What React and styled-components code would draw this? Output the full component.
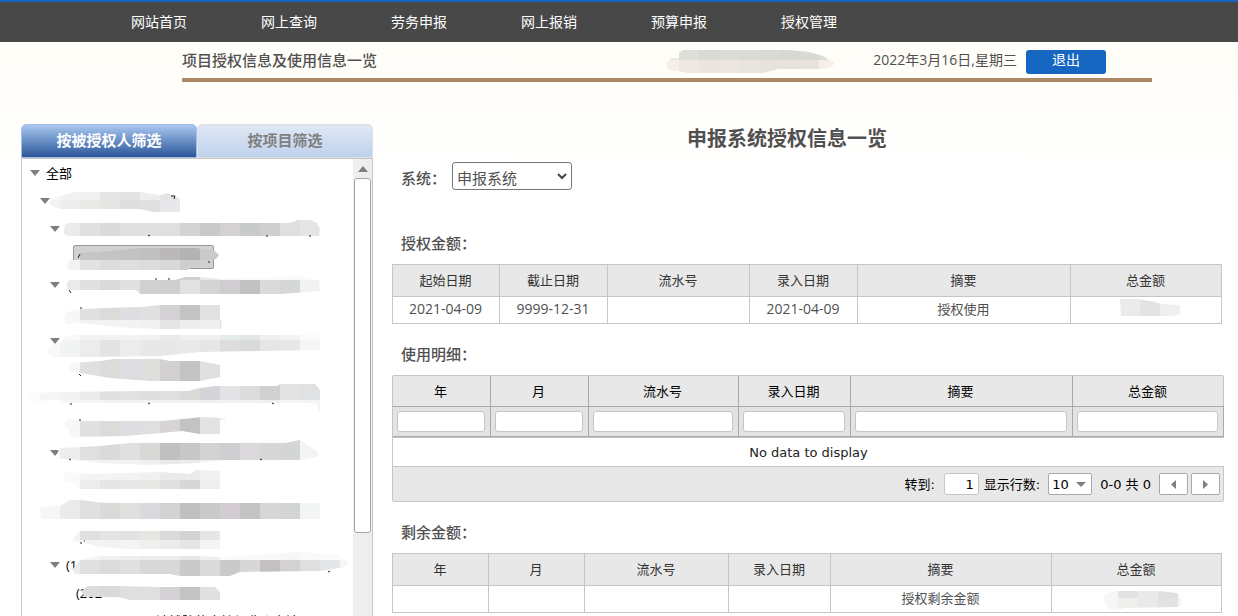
import styled, { createGlobalStyle } from "styled-components";

const navItems = ["网站首页", "网上查询", "劳务申报", "网上报销", "预算申报", "授权管理"];

// level decides the indent, text is what stays readable next to a mark
const treeRows = [
  { level: 0, open: true, text: "全部" },
  { level: 1, open: true },
  { level: 2, open: true },
  { level: 3, selected: true },
  { level: 2, open: true },
  { level: 3 },
  { level: 2, open: true },
  { level: 3 },
  { level: 2 },
  { level: 3 },
  { level: 2, open: true },
  { level: 3 },
  { level: 2 },
  { level: 3 },
  { level: 2, open: true, text: "(1" },
  { level: 3, text: "(202" },
  { level: 11, text: "读博院的支持经费张立波" },
];

// marks over private names: an outline, filled with 20px blocks.
// bands are [top, height, first block x, block colours]
const treeMarks = [
  {
    d: "M49 202L55 197L75 192H140L160 195L167 193L173 195L180 199V212H153L140 209H60L50 205Z",
    bands: [
      [180, 20, 40, "#f6f6f6 #f2f2f2 #f0f0f0 #e6e6e6 #e3e3e3 #eeecec #e6e4e6"],
      [200, 20, 40, "#f2f2f2 #ededed #e9e9e7 #e5e5e3 #dcdfdd #e0e0e1 #e8e8ea"],
    ],
  },
  {
    d: "M64 230L65 225L68 223H290L298 220H310L317 223L320 229L319 236H67L64 234Z",
    bands: [[220, 20, 60, "#ebebeb #e0e0e0 #dcdad9 #dfe0df #dfe0df #e0dfdf #d3d3d3 #c8cac9 #d3d1d2 #c9cbca #cfcfd1 #dfdfdf #e3e6e5"]],
  },
  {
    d: "M80 253L110 251L140 248H195L214 250L219 255L216 259L200 262L188 270H70L67 266L70 260H80Z",
    bands: [
      [240, 20, 60, "#f2f2f2 #c6c6c6 #c4c4c4 #c3c3c2 #c0c0c0 #bbb8b9 #b3b3b3 #cacaca"],
      [260, 20, 60, "#f2f2f2 #e2e2e2 #dcdcdc #dfdfe0 #dcdcdc #d8d8d8 #cccfce #d1d1d1"],
    ],
  },
  {
    d: "M66 284L69 280H175L185 277H200L220 279L300 276L319 280L320 291L295 293L280 294H140L136 290H69Z",
    bands: [
      [260, 20, 160, "#d0d0d0 #d0d0d0 #e9e9e9 #f5f5f5 #fafafa #fafafa #fafafa #fafafa"],
      [280, 20, 60, "#ebebeb #e0e0e0 #dcdad9 #dfe0e0 #d0d0d1 #cfcfcf #e3e1e2 #d4d4d5 #cfcdd0 #c2c2c2 #dadada #d6d8d8 #f0f3f2"],
    ],
  },
  {
    d: "M64 318L66 312L80 309L107 308L140 307L160 305H220V319L222 322L221 329H160L130 328L100 325L80 323L66 324Z",
    bands: [
      [300, 20, 60, "#f7f7f7 #e0e0e0 #dbdbd9 #dcdee2 #dfe0df #d3d1d3 #c3c3c3 #e1e1e1"],
      [320, 20, 60, "#f7f7f7 #f3f3f3 #f3f3f3 #f3f3f3 #f0f0f0 #e6e6e6 #ededed #efefef #e3e3e3"],
    ],
  },
  {
    d: "M47 351L50 345L60 343L67 336L72 335H320V350L260 351L200 352L160 356L90 357H52Z",
    bands: [
      [320, 20, 60, "#f8f9f8 #f3f3f3 #f2f2f2 #f3f3f3 #f0f0f0 #eaeaea #f0f0f0 #efefef #e6ecea #e3e8e7 #f0f0f0 #f3f3f3 #fbfbfb"],
      [340, 20, 40, "#f8faf9 #f1f4f3 #ececec #e4e4e4 #ececea #e8e8e8 #e8e8e8 #ebe8ea #e6e6e6 #dedcdf #dadada #e6e6e6 #e7e7e8 #f6f6f6"],
    ],
  },
  {
    d: "M69 368L73 363L100 361L115 359H160L170 361H200L220 365V377L200 381H150L110 378L80 373L72 372Z",
    bands: [[340, 60, 60, "#f7f7f7 #e0e0e0 #dbdbd9 #dcdde1 #dedfdd #d2d0d1 #c3c3c3 #e0e0e0"]],
  },
  {
    d: "M28 398L32 393L60 392L140 391H188L200 388L215 386H277L280 384H315L320 390V414L317 405L310 403H60V400L42 401L32 404Z",
    bands: [
      [380, 20, 20, "#fbfbfb #f6f6f6 #f2f2f2 #ebebeb #e0e0e0 #e3e2e1 #dedede #dfdfdf #dadad8 #d3d4d7 #e3e3e5 #dcdcdc #d0d0d3 #e3e3e4 #dfe1e2"],
      [400, 20, 20, "#fbfbfb #fafafa #f6f6f6 #f6f6f6 #f3f3f3 #f3f3f3 #f3f3f3 #f3f3f3 #f3f3f3 #f0f0f0 #f3f3f3 #f3f3f3 #f0f0f0 #f5f5f5 #f3f5f4"],
    ],
  },
  {
    d: "M64 424L68 419L80 421H162L203 417L225 418V420H220V434H200L182 431L150 434L125 436L72 437L69 430Z",
    bands: [[400, 40, 60, "#f7f7f7 #e0e0e0 #dbdbd9 #dcdee1 #dfdfdf #d6d4d5 #c3c3c3 #e3e3e3 #f0f0f0"]],
  },
  {
    d: "M58 450L62 448L100 446L130 443H285L300 440L318 452L319 456L300 460H225L200 463L150 465L100 463L70 459H60Z",
    bands: [
      [440, 20, 40, "#f5f5f5 #ededed #dfdfdf #dbdad9 #e0e0e0 #d8d8d7 #c0c0c0 #c8c6c7 #d3d3d3 #cfcfd2 #dbd9db #d7d7d7 #d4d6d5 #f2f5f4"],
      [460, 20, 40, "#fafafa #f6f6f6 #f3f3f3 #f2f2f2 #f2f2f2 #f0f0f0 #e9e9e9 #ececec #f2f2f2 #f2f2f2"],
    ],
  },
  {
    d: "M63 476L66 472L90 474L160 472L190 474L196 470L220 471V489H80L76 485L64 481Z",
    bands: [
      [460, 20, 60, "#fafafa #f4f4f4 #f3f3f3 #f2f2f2 #f0f0f0 #eaeaea #eaeaea #f0f0f0"],
      [480, 20, 60, "#fafafa #ececec #e6e6e5 #e8e8e8 #e8e8e7 #e0e0e0 #d7d7d7 #ecefee"],
    ],
  },
  {
    d: "M39 512L41 507L60 506L70 500H80L105 503H320V519H42Z",
    bands: [[500, 20, 20, "#f6f6f6 #f6f6f6 #ebebeb #e0e0e0 #dcdad9 #dfdfde #dadade #d2d2d2 #c0c0c0 #c9c9c9 #d3cdd3 #c3c3c3 #d7d7d7 #d3d5d4 #f2f5f4"]],
  },
  {
    d: "M73 538L80 531H220V549H130L100 547L80 542H75Z",
    bands: [
      [520, 20, 60, "#f3f3f3 #e0e0e0 #e4e4e2 #e3e3e3 #e6e6e3 #dadada #d3d3d3 #e6e6e6"],
      [540, 20, 60, "#f6f6f6 #f3f3f3 #f3f3f3 #f3f5f4 #f0f0f0 #ececec #e6e6e6 #f5f5f5"],
    ],
  },
  {
    d: "M72 570L80 560L100 556H200L220 557L300 552L340 555L341 558L346 560L348 564L345 567L320 571L240 572L230 576H180L170 574H75Z",
    bands: [
      [540, 20, 60, "#f3f3f3 #f3f3f3 #f0f0f0 #efefef #ececec #ececec #e6e6e6 #efefef #fafafa #f9f9f9 #f9f9f9 #f6f6f6 #f9f9f9 #fafafa #fafafa"],
      [560, 20, 60, "#ececec #e0e0e0 #dcdbda #dfdfdf #d8d8d8 #d8d8d8 #cacaca #dadada #cacaca #d7d7d7 #c3c0bf #d2d2d5 #dfdfdf #e3e5e8 #f6f6f6"],
    ],
  },
  {
    d: "M81 591L88 586H115L160 587H215L220 592V600H130L118 597H85Z",
    bands: [[580, 20, 80, "#dcdcdc #dad9d8 #dfdfe2 #dfdfdf #d4d2d4 #c3c3c3 #e0e0e0"]],
  },
];

const userMark = {
  d: "M0 13L4 8H12V3L16 0H122L142 2L156 6L162 10L167 13L165 17L160 18L152 19H112L96 23H20L12 21H4L0 18Z",
  bands: [
    [-10, 20, -8, "#ebe9e4 #dfdfda #d9d9d5 #dbdbd8 #dadad6 #d9d9d5 #d7d7d3 #d9d9d5 #dedeDA"],
    [10, 20, -8, "#f5efe8 #efe8e1 #eae5df #ede6e0 #e8e5de #e8e2dc #e8e2dc #e9e3dd #f5efe8"],
  ],
};

const amountMark = {
  d: "M0 0H18L36 3L41 5L60 6V15L53 17H1Z",
  bands: [[0, 20, 0, "#ebebeb #e3e3e3 #efefef"]],
};

const restMark = {
  d: "M0 6L4 2L16 0H56L74 2L79 9L76 16L20 17L14 20H6L4 14Z",
  bands: [
    [-3, 10, -5, "#f6f6f6 #e3e3e3 #eaeaea #e0e0e0 #f5f5f5"],
    [7, 20, -5, "#f6f6f6 #efefed #e9e9e9 #e2e2e2 #f3f3f3"],
  ],
};

const Mark = ({ id, mark }) => (
  <g clipPath={`url(#${id})`}>
    <clipPath id={id}>
      <path d={mark.d} />
    </clipPath>
    {mark.bands.map(([y, h, x, colors]) =>
      colors.split(" ").map((fill, i) => (
        <rect key={`${y}-${i}`} x={x + i * 20} y={y} width="20" height={h} fill={fill} shapeRendering="crispEdges" />
      ))
    )}
  </g>
);

const DataTable = ({ label, widths, heads, cells }) => (
  <PlainTable aria-label={label}>
    <colgroup>
      {widths.map((w, i) => (
        <Col key={i} $w={w} />
      ))}
    </colgroup>
    <thead>
      <tr>
        {heads.map((h) => (
          <th key={h}>{h}</th>
        ))}
      </tr>
    </thead>
    <tbody>
      <tr>
        {cells.map((c, i) => (
          <td key={i}>{c}</td>
        ))}
      </tr>
    </tbody>
  </PlainTable>
);

const usageHeads = ["年", "月", "流水号", "录入日期", "摘要", "总金额"];
const usageWidths = [98, 98, 150, 112, 222, 151];

const App = () => {
  return (
    <Page>
      <GlobalStyle />
      <Nav>
        {navItems.map((item) => (
          <a href="#/" key={item}>{item}</a>
        ))}
      </Nav>

      <TopBar>
        <h1>项目授权信息及使用信息一览</h1>
        <svg width="168" height="28" viewBox="0 -4 168 28">
          <Mark id="user" mark={userMark} />
        </svg>
        <Today>2022年3月16日,星期三</Today>
        <LogoutButton type="button">退出</LogoutButton>
      </TopBar>

      <Content>
        <Sidebar>
          <Tabs>
            <Tab type="button" $active>按被授权人筛选</Tab>
            <Tab type="button">按项目筛选</Tab>
          </Tabs>
          <TreePanel>
            <Tree>
              {treeRows.map((row, i) => (
                <TreeRow key={i} $level={row.level}>
                  <Arrow viewBox="0 0 10 6" $open={row.open}>
                    <path d="M0 0H10L5 6Z" />
                  </Arrow>
                  <Label $selected={row.selected}>{row.text}</Label>
                </TreeRow>
              ))}
              <Marks viewBox="22 159 331 458">
                {treeMarks.map((mark, i) => (
                  <Mark key={i} id={`tree-${i}`} mark={mark} />
                ))}
                <path
                  d="M171 196h4l-1 3M78 258l2-4M208 262h2M148 236l2-1M266 236h2M309 236h2M155 279h2M168 279h2M69 290l2 3M80 308h2M79 374l2 2M70 404h2M148 404l2-1M272 403l2 1M79 420h2M69 459l2 1M260 459l2 1M80 543l2 0M84 541h1M328 572l2-1"
                  fill="none"
                  stroke="#222"
                />
              </Marks>
            </Tree>
            <ScrollBar>
              <svg width="10" height="6" viewBox="0 0 10 6">
                <path d="M0 6H10L5 0Z" fill="#7f7f7f" />
              </svg>
              <Thumb />
            </ScrollBar>
          </TreePanel>
        </Sidebar>

        <Main>
          <h2>申报系统授权信息一览</h2>
          <SystemRow>
            <label htmlFor="system">系统：</label>
            <SelectBox>
              <select id="system">
                <option>申报系统</option>
              </select>
              <svg width="10" height="7" viewBox="0 0 10 7">
                <path d="M1 1L5 5L9 1" fill="none" stroke="#444" strokeWidth="2" />
              </svg>
            </SelectBox>
          </SystemRow>

          <h3>授权金额：</h3>
          <DataTable
            label="授权金额"
            widths={[107, 108, 142, 108, 213, 151]}
            heads={["起始日期", "截止日期", "流水号", "录入日期", "摘要", "总金额"]}
            cells={[
              <Digits>2021-04-09</Digits>,
              <Digits>9999-12-31</Digits>,
              "",
              <Digits>2021-04-09</Digits>,
              "授权使用",
              <svg width="68" height="20" viewBox="-8 0 68 20">
                <Mark id="amount" mark={amountMark} />
              </svg>,
            ]}
          />

          <h3>使用明细：</h3>
          <Grid>
            <GridTable aria-label="使用明细">
              <colgroup>
                {usageWidths.map((w, i) => (
                  <Col key={i} $w={w} />
                ))}
              </colgroup>
              <thead>
                <tr>
                  {usageHeads.map((h) => (
                    <th key={h}>{h}</th>
                  ))}
                </tr>
                <tr>
                  {usageHeads.map((h) => (
                    <td key={h}>
                      <input type="text" aria-label={h} />
                    </td>
                  ))}
                </tr>
              </thead>
              <tbody>
                <tr>
                  <td colSpan="6">No data to display</td>
                </tr>
              </tbody>
            </GridTable>
            <Pager>
              <label htmlFor="goto">转到:</label>
              <input id="goto" type="text" defaultValue="1" />
              <label htmlFor="size">显示行数:</label>
              <SizeBox>
                <select id="size">
                  <option>10</option>
                </select>
                <svg width="10" height="5" viewBox="0 0 10 5">
                  <path d="M0 0H10L5 5Z" fill="#7f7f7f" />
                </svg>
              </SizeBox>
              <span>0-0 共 0</span>
              <PagerButton type="button" aria-label="上一页">
                <svg width="5" height="9" viewBox="0 0 5 9">
                  <path d="M5 0V9L0 4.5Z" />
                </svg>
              </PagerButton>
              <PagerButton type="button" aria-label="下一页">
                <svg width="5" height="9" viewBox="0 0 5 9">
                  <path d="M0 0V9L5 4.5Z" />
                </svg>
              </PagerButton>
            </Pager>
          </Grid>

          <h3>剩余金额：</h3>
          <DataTable
            label="剩余金额"
            widths={[96, 96, 144, 102, 221, 170]}
            heads={usageHeads}
            cells={[
              "",
              "",
              "",
              "",
              "授权剩余金额",
              <svg width="94" height="22" viewBox="-14 -4 94 22">
                <Mark id="rest" mark={restMark} />
              </svg>,
            ]}
          />
        </Main>
      </Content>
    </Page>
  );
};

const GlobalStyle = createGlobalStyle`
  * {
    box-sizing: border-box;
    margin: 0;
    padding: 0;
  }
  body {
    font-family: "Open Sans", "Noto Sans CJK SC", sans-serif;
    font-size: 13px;
    color: #505050;
  }
  button, input, select {
    font-family: inherit;
  }
`;

const Page = styled.div`
  height: 100vh;
  overflow: hidden;
  background: linear-gradient(#fffdf7 40px, #ffffff 180px);
`;

const Nav = styled.nav`
  display: flex;
  height: 42px;
  padding-left: 94px;
  border-top: 2px solid #1866c0;
  background: #484848;
  a {
    width: 130px;
    line-height: 40px;
    font-size: 14px;
    text-align: center;
    text-decoration: none;
    color: #ffffff;
  }
`;

const TopBar = styled.header`
  display: flex;
  align-items: center;
  height: 40px;
  margin: 0 86px 0 182px;
  padding-right: 46px;
  border-bottom: 4px solid #ae8968;
  h1 {
    flex: 1;
    font-size: 15px;
    line-height: 24px;
    font-weight: 500;
  }
`;

const Today = styled.span`
  margin: 0 9px 0 38px;
  font-size: 14px;
  line-height: 24px;
`;

const LogoutButton = styled.button`
  width: 80px;
  height: 24px;
  margin-top: 4px;
  padding-bottom: 4px;
  border: none;
  border-radius: 3px;
  background: #1667c1;
  color: #ffffff;
  font-size: 14px;
  line-height: 20px;
`;

const Content = styled.div`
  display: flex;
  gap: 19px;
  padding: 42px 14px 0 21px;
`;

const Sidebar = styled.aside`
  width: 352px;
  flex-shrink: 0;
`;

const Tabs = styled.div`
  display: flex;
`;

const Tab = styled.button`
  flex: 1;
  height: 34px;
  padding-bottom: 4px;
  border: 1px solid ${({ $active }) => ($active ? "#a3c0e8" : "#dcdfe4")};
  border-radius: 5px 5px 0 0;
  background: ${({ $active }) =>
    $active ? "linear-gradient(#a9c8f0, #2a5699)" : "linear-gradient(#dfe8f5, #bfd1ec)"};
  color: ${({ $active }) => ($active ? "#ffffff" : "#808080")};
  font-size: 15px;
  font-weight: bold;
`;

const TreePanel = styled.div`
  display: flex;
  border: 1px solid #c6c6c6;
  background: #ffffff;
`;

const Tree = styled.ul`
  position: relative;
  flex: 1;
  list-style: none;
  color: #000000;
`;

const TreeRow = styled.li`
  display: flex;
  align-items: center;
  height: 28px;
  padding-left: ${({ $level }) => 8 + $level * 10}px;
`;

const Arrow = styled.svg`
  width: 10px;
  height: 6px;
  fill: #7f7f7f;
  visibility: ${({ $open }) => ($open ? "visible" : "hidden")};
`;

const Label = styled.span`
  margin-left: 3px;
  padding: 0 2px;
  line-height: 22px;
  border: 1px solid transparent;
  border-radius: 2px;
  ${({ $selected }) =>
    $selected &&
    `
    width: 141px;
    height: 24px;
    border-color: #999999;
    background: #d1d1d1;
  `}
`;

const Marks = styled.svg`
  position: absolute;
  left: 0;
  top: 0;
  width: 331px;
  height: 458px;
`;

const ScrollBar = styled.div`
  display: flex;
  flex-direction: column;
  align-items: center;
  gap: 6px;
  width: 19px;
  padding-top: 7px;
  background: #eeeeee;
`;

const Thumb = styled.div`
  width: 17px;
  height: 355px;
  border: 1px solid #a5a5a5;
  border-radius: 3px;
  background: #ffffff;
`;

const Main = styled.main`
  flex: 1;
  min-width: 0;
  h2 {
    padding: 2px 42px 0 0;
    font-size: 20px;
    line-height: 26px;
    text-align: center;
  }
  h3 {
    margin: 18px 0 9px 9px;
    font-size: 15px;
    line-height: 24px;
    font-weight: 500;
  }
`;

const SystemRow = styled.div`
  display: flex;
  align-items: center;
  padding: 10px 0 23px 9px;
  label {
    width: 51px;
    padding-top: 2px;
    font-size: 15px;
    font-weight: 500;
  }
`;

const SelectBox = styled.div`
  position: relative;
  select {
    appearance: none;
    width: 120px;
    height: 28px;
    padding: 4px 4px 0;
    border: 1px solid #767676;
    border-radius: 3px;
    background: #ffffff;
    color: #505050;
    font-size: 15px;
  }
  svg {
    position: absolute;
    right: 5px;
    top: 11px;
    pointer-events: none;
  }
`;

const Col = styled.col`
  width: ${({ $w }) => $w}px;
`;

const PlainTable = styled.table`
  width: calc(100% - 2px);
  table-layout: fixed;
  border-collapse: collapse;
  background: #ffffff;
  th, td {
    padding: 0 1px 2px 0;
    border: 1px solid #c6c6c6;
    text-align: center;
    font-weight: normal;
    line-height: 18px;
  }
  th {
    height: 32px;
    background: #e8e8e8;
    color: #333333;
  }
  td {
    height: 27px;
  }
  svg {
    display: block;
    margin: 0 auto;
  }
`;

const Digits = styled.span`
  font-size: 14px;
`;

const Grid = styled.div`
  border: 1px solid #c6c6c6;
  border-radius: 2px;
  background: #e8e8e8;
  color: #000000;
`;

const GridTable = styled.table`
  width: 100%;
  table-layout: fixed;
  border-spacing: 0;
  th {
    height: 31px;
    padding: 0 2px 2px 0;
    border-right: 1px solid #a9a9a9;
    border-bottom: 1px solid #a9a9a9;
    font-weight: normal;
  }
  th:last-child {
    border-right: none;
  }
  thead td {
    height: 30px;
    padding: 0 5px 0 4px;
    border-right: 1px solid #a9a9a9;
    border-bottom: 1px solid #a9a9a9;
    background: #e3e3e3;
  }
  input {
    display: block;
    width: 100%;
    height: 21px;
    border: 1px solid #c6c6c6;
    border-radius: 3px;
    background: #ffffff;
  }
  tbody td {
    height: 30px;
    border-top: 1px solid #c6c6c6;
    border-bottom: 1px solid #c6c6c6;
    background: #ffffff;
    color: #222222;
    text-align: center;
    font-family: "DejaVu Sans", sans-serif;
  }
`;

const Pager = styled.div`
  display: flex;
  align-items: center;
  justify-content: flex-end;
  height: 34px;
  padding-right: 3px;
  font-family: "DejaVu Sans", "Noto Sans CJK SC", sans-serif;
  label, span {
    padding-bottom: 2px;
  }
  input {
    width: 35px;
    height: 22px;
    margin: 0 5px 0 9px;
    padding: 0 4px;
    border: 1px solid #c6c6c6;
    border-radius: 3px;
    font-size: 13px;
    text-align: right;
  }
`;

const SizeBox = styled.div`
  position: relative;
  margin: 0 8px;
  select {
    appearance: none;
    display: block;
    width: 44px;
    height: 22px;
    padding: 0 3px;
    border: 1px solid #a9a9a9;
    border-radius: 2px;
    background: #ffffff;
    font-size: 13px;
  }
  svg {
    position: absolute;
    right: 6px;
    top: 9px;
    pointer-events: none;
  }
`;

const PagerButton = styled.button`
  display: flex;
  align-items: center;
  justify-content: center;
  width: 29px;
  height: 22px;
  margin-left: 3px;
  border: 1px solid #a9a9a9;
  border-radius: 2px;
  background: #ffffff;
  fill: #7f7f7f;
  span + & {
    margin-left: 8px;
  }
`;

export default App;
